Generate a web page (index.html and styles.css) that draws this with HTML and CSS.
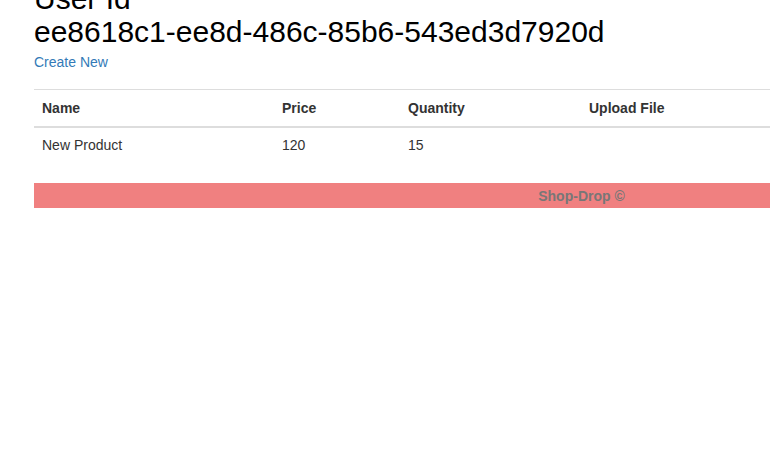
FILE: index.html
```html
<!DOCTYPE html>
<html>
<head>
<meta charset="utf-8">
<link rel="stylesheet" href="styles.css">
</head>
<body>
<div class="page">
  <h2 class="title">User Id<br>ee8618c1-ee8d-486c-85b6-543ed3d7920d</h2>
  <p class="actions"><a href="#" class="link">Create New</a></p>
  <table class="grid">
    <tr>
      <th class="c-name">Name</th>
      <th class="c-price">Price</th>
      <th class="c-qty">Quantity</th>
      <th class="c-file">Upload File</th>
    </tr>
    <tr>
      <td>New Product</td>
      <td>120</td>
      <td>15</td>
      <td></td>
    </tr>
  </table>
  <footer class="footer">Shop-Drop ©</footer>
</div>
</body>
</html>
```
FILE: styles.css
```css
html, body {
  margin: 0;
  padding: 0;
  overflow: hidden;
  background: #fff;
}
body {
  font-family: "Liberation Sans", Arial, Helvetica, sans-serif;
  font-size: 14px;
  line-height: 20px;
  color: #333;
}
.page {
  width: 1095px;
  padding-left: 34px;
}
.title {
  margin: -18px 0 0;
  font-size: 30px;
  line-height: 33px;
  font-weight: 400;
  color: #000;
}
.actions {
  margin: 4px 0 17px;
}
.link {
  color: #337ab7;
  text-decoration: none;
}
.grid {
  width: 1095px;
  border-collapse: collapse;
  border-spacing: 0;
  margin-bottom: 19px;
}
.grid th,
.grid td {
  padding: 8px;
  text-align: left;
  vertical-align: top;
  line-height: 20px;
  border-top: 1px solid #ddd;
}
.grid th {
  font-weight: 700;
  border-bottom: 2px solid #ddd;
}
.grid td {
  border-top: 0;
  padding-top: 7px;
  padding-bottom: 9px;
}
.c-name { width: 224px; }
.c-price { width: 110px; }
.c-qty { width: 165px; }
.footer {
  background: #f08080;
  color: #777;
  font-weight: 700;
  text-align: center;
  height: 25px;
  box-sizing: border-box;
  padding-top: 3px;
  line-height: 20px;
}
```
